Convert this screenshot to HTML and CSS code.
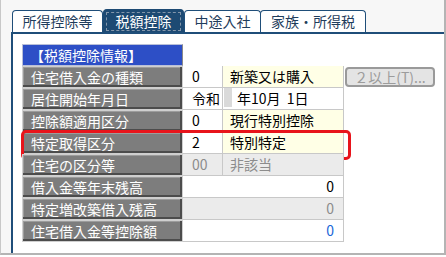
FILE: index.html
```html
<!DOCTYPE html>
<html lang="ja">

<head>
    <meta charset="UTF-8">
    <title>税額控除</title>
    <link rel="stylesheet" href="styles.css">
</head>

<body>
    <div class="window">
        <div class="tabs">
            <div class="tab tab-1">所得控除等</div>
            <div class="tab tab-2 active"><span>税額控除</span></div>
            <div class="tab tab-3">中途入社</div>
            <div class="tab tab-4">家族・所得税</div>
        </div>
        <div class="panel">
            <div class="form">
                <div class="header">【税額控除情報】</div>

                <div class="row">
                    <div class="label">住宅借入金の種類</div>
                    <div class="code">0</div>
                    <div class="name yellow">新築又は購入</div>
                    <button class="more" disabled>２以上(T)...</button>
                </div>
                <div class="row">
                    <div class="label">居住開始年月日</div>
                    <div class="code">令和</div>
                    <div class="name date"><span class="year"></span>年10月&nbsp;&nbsp;1日</div>
                </div>
                <div class="row">
                    <div class="label">控除額適用区分</div>
                    <div class="code">0</div>
                    <div class="name yellow">現行特別控除</div>
                </div>
                <div class="row marked">
                    <div class="label">特定取得区分</div>
                    <div class="code">2</div>
                    <div class="name yellow">特別特定</div>
                </div>
                <div class="row off">
                    <div class="label">住宅の区分等</div>
                    <div class="code">00</div>
                    <div class="name">非該当</div>
                </div>
                <div class="row">
                    <div class="label">借入金等年末残高</div>
                    <div class="amount">0</div>
                </div>
                <div class="row off">
                    <div class="label">特定増改築借入残高</div>
                    <div class="amount">0</div>
                </div>
                <div class="row">
                    <div class="label">住宅借入金等控除額</div>
                    <div class="amount blue">0</div>
                </div>
            </div>
        </div>
    </div>
</body>

</html>
```

FILE: styles.css
```css
* {
    box-sizing: border-box;
}

body {
    margin: 0;
    background-color: #ffffff;
    font-family: 'Noto Sans CJK JP', 'Noto Sans', sans-serif;
    font-size: 14px;
}

.window {
    width: 446px;
    height: 255px;
    background-color: #f7f7f7;
    border-left: 1px solid #c8c8c8;
    border-right: 2px solid #b4b4b4;
    border-bottom: 2px solid #b4b4b4;
    padding: 9px 0 0 10px;
    display: flex;
    flex-direction: column;
}

.tabs {
    display: flex;
    align-items: flex-end;
    height: 23px;
    margin-left: 1px;
}

.tab {
    height: 22px;
    line-height: 20px;
    text-align: center;
    color: #1f3d5c;
    background-color: #ffffff;
    border: 1px solid #1f4e79;
    border-bottom: none;
    border-radius: 4px 4px 0 0;
}

.tab-1 { width: 91px; }
.tab-2 { width: 81px; }
.tab-3 { width: 77px; }
.tab-4 { width: 106px; margin-left: -1px; }

.tab.active {
    height: 23px;
    background-color: #1d4a73;
    color: #ffffff;
    padding: 2px 2px 0;
    border-color: #1d4a73;
}

.tab.active span {
    display: block;
    height: 19px;
    line-height: 17px;
    border: 1px dashed #8296ab;
}

.panel {
    flex: 1;
    background-color: #ffffff;
    border-top: 2px solid #1f4e79;
    border-left: 2px solid #1f4e79;
    padding: 10px 0 0 9px;
}

.form {
    width: 413px;
}

.header {
    width: 161px;
    height: 22px;
    line-height: 20px;
    padding-left: 7px;
    color: #ffffff;
    background-color: #2d4fc6;
    border: 1px solid #b8bfd8;
    border-right-color: #8a8a8a;
}

.row {
    position: relative;
    display: flex;
    height: 22px;
    line-height: 20px;
}

.label {
    width: 161px;
    padding-left: 8px;
    color: #ffffff;
    background-color: #7d7d7d;
    border: 1px solid #cfcfcf;
    box-shadow: inset -2px -2px 0 #4c4c4c, inset 1px 1px 0 #9c9c9c;
}

.code,
.name,
.amount {
    border-bottom: 1px solid #c8c8c8;
    border-right: 1px solid #c8c8c8;
    background-color: #ffffff;
    color: #000000;
}

.code {
    width: 40px;
    padding-left: 9px;
}

.name {
    width: 121px;
    padding-left: 7px;
}

.name.yellow {
    background-color: #ffffe6;
}

.date {
    display: flex;
    padding-left: 1px;
}

.year {
    width: 8px;
    height: 19px;
    margin-right: 5px;
    background-color: #dadada;
}

.amount {
    width: 161px;
    text-align: right;
    padding-right: 9px;
}

.amount.blue {
    color: #1a66d8;
}

.row.off .code,
.row.off .name,
.row.off .amount {
    background-color: #ebebeb;
    color: #8c8c8c;
}

.more {
    margin: 1px 0 0 1px;
    width: 90px;
    height: 20px;
    padding: 0;
    font-family: inherit;
    font-size: 14px;
    line-height: 16px;
    color: #9c9c9c;
    background-color: #e4e4e4;
    border: 2px solid #9a9a9a;
    border-radius: 4px;
}

.row.marked::after {
    content: '';
    position: absolute;
    left: -1px;
    top: -2px;
    width: 324px;
    height: 24px;
    border: 3px solid #e8141b;
    border-radius: 5px;
}
```
